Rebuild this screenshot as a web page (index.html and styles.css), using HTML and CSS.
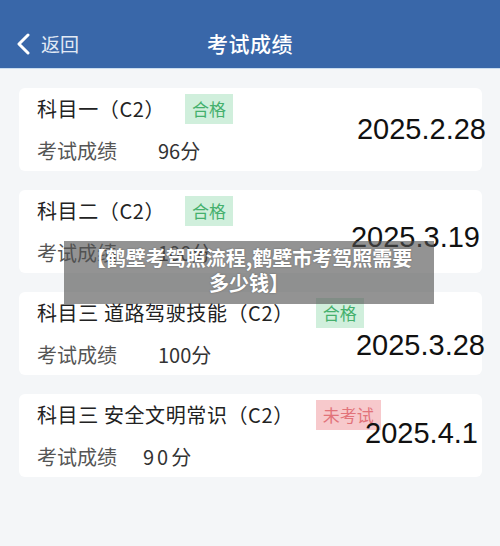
FILE: index.html
```html
<!DOCTYPE html>
<html lang="zh-CN">
<head>
<meta charset="utf-8">
<title>考试成绩</title>
<link rel="stylesheet" href="styles.css">
</head>
<body>
<div class="page">
  <header class="topbar">
    <div class="back">
      <svg class="chev" width="14" height="22" viewBox="0 0 14 22"><polyline points="12,2 3,11 12,20" fill="none" stroke="#ffffff" stroke-width="3" stroke-linecap="round" stroke-linejoin="round"/></svg>
      <span class="back-text">返回</span>
    </div>
    <h1 class="title">考试成绩</h1>
  </header>

  <main class="list">
    <section class="card">
      <div class="info">
        <div class="row1"><span class="subject">科目一（C2）</span><span class="badge pass b-short">合格</span></div>
        <div class="row2"><span class="label">考试成绩</span><span class="score">96分</span></div>
      </div>
      <div class="date d1">2025.2.28</div>
    </section>

    <section class="card">
      <div class="info">
        <div class="row1"><span class="subject">科目二（C2）</span><span class="badge pass b-short">合格</span></div>
        <div class="row2"><span class="label">考试成绩</span><span class="score">100分</span></div>
      </div>
      <div class="date d2">2025.3.19</div>
    </section>

    <section class="card">
      <div class="info">
        <div class="row1"><span class="subject">科目三 道路驾驶技能（C2）</span><span class="badge pass">合格</span></div>
        <div class="row2"><span class="label">考试成绩</span><span class="score">100分</span></div>
      </div>
      <div class="date d3">2025.3.28</div>
    </section>

    <section class="card">
      <div class="info">
        <div class="row1"><span class="subject">科目三 安全文明常识（C2）</span><span class="badge fail">未考试</span></div>
        <div class="row2"><span class="label">考试成绩</span><span class="score spaced">90分</span></div>
      </div>
      <div class="date d4">2025.4.1</div>
    </section>
  </main>

  <div class="caption">【鹤壁考驾照流程,鹤壁市考驾照需要<br>多少钱】</div>
</div>
</body>
</html>
```

FILE: styles.css
```css
* { box-sizing: border-box; margin: 0; padding: 0; }

html, body {
  width: 500px;
  height: 546px;
  overflow: hidden;
}

body {
  background: #f4f6f8;
  font-family: "Noto Sans CJK SC", "Noto Sans", sans-serif;
}

.page {
  position: relative;
  width: 500px;
  height: 546px;
}

.topbar {
  position: relative;
  height: 69px;
  background: #3967a9;
  border-bottom: 1px solid #c9dcef;
  display: flex;
  align-items: center;
  justify-content: center;
}

.back {
  position: absolute;
  left: 16px;
  top: 33px;
  display: flex;
  align-items: center;
  gap: 11px;
}

.chev { display: block; }

.back-text {
  color: #e2eaf5;
  font-size: 19px;
  line-height: 22px;
}

.title {
  margin-top: 18px;
  color: #ffffff;
  font-size: 21px;
  font-weight: 500;
  line-height: 26px;
  letter-spacing: 0.5px;
}

.list {
  display: flex;
  flex-direction: column;
  gap: 19px;
  padding: 19px 18px 0 19px;
}

.card {
  background: #ffffff;
  border-radius: 6px;
  height: 83px;
  display: flex;
  align-items: flex-start;
  padding: 6px 0 0 18px;
}

.info {
  flex: 1;
  min-width: 0;
  display: flex;
  flex-direction: column;
  gap: 13px;
}

.row1 {
  display: flex;
  align-items: center;
  height: 30px;
  white-space: nowrap;
}

.subject {
  flex-shrink: 0;
  color: #222222;
  font-size: 20px;
  line-height: 28px;
  letter-spacing: 0.6px;
}

.badge {
  flex-shrink: 0;
  height: 30px;
  padding: 0 7px;
  font-size: 17px;
  line-height: 30px;
  margin-left: 22px;
}

.b-short { margin-left: 20px; }

.pass {
  background: #d0efdc;
  color: #44b06c;
}

.fail {
  background: #f7c9cc;
  color: #e2737a;
}

.row2 {
  display: flex;
  align-items: center;
  height: 28px;
  white-space: nowrap;
}

.label {
  flex-shrink: 0;
  color: #555555;
  font-size: 20px;
  line-height: 28px;
  width: 121px;
}

.score {
  color: #333333;
  font-size: 20px;
  line-height: 28px;
}

.spaced {
  margin-left: -15px;
  letter-spacing: 3px;
}

.date {
  flex-shrink: 0;
  font-family: "Liberation Sans", Arial, sans-serif;
  font-size: 29px;
  line-height: 34px;
  color: #111111;
  white-space: nowrap;
}

.d1 { margin-top: 18px; margin-right: -4px; }
.d2 { margin-top: 24px; margin-right: 2px; }
.d3 { margin-top: 30px; margin-right: -3px; }
.d4 { margin-top: 16px; margin-right: 4px; }

.caption {
  position: absolute;
  left: 64px;
  top: 241px;
  width: 370px;
  height: 63px;
  padding: 4px 10px 0;
  background: rgba(80, 80, 80, 0.62);
  color: #ffffff;
  font-size: 20px;
  font-weight: 700;
  line-height: 25px;
  text-align: center;
  text-shadow: 0 0 2px rgba(0, 0, 0, 0.3);
}
```
